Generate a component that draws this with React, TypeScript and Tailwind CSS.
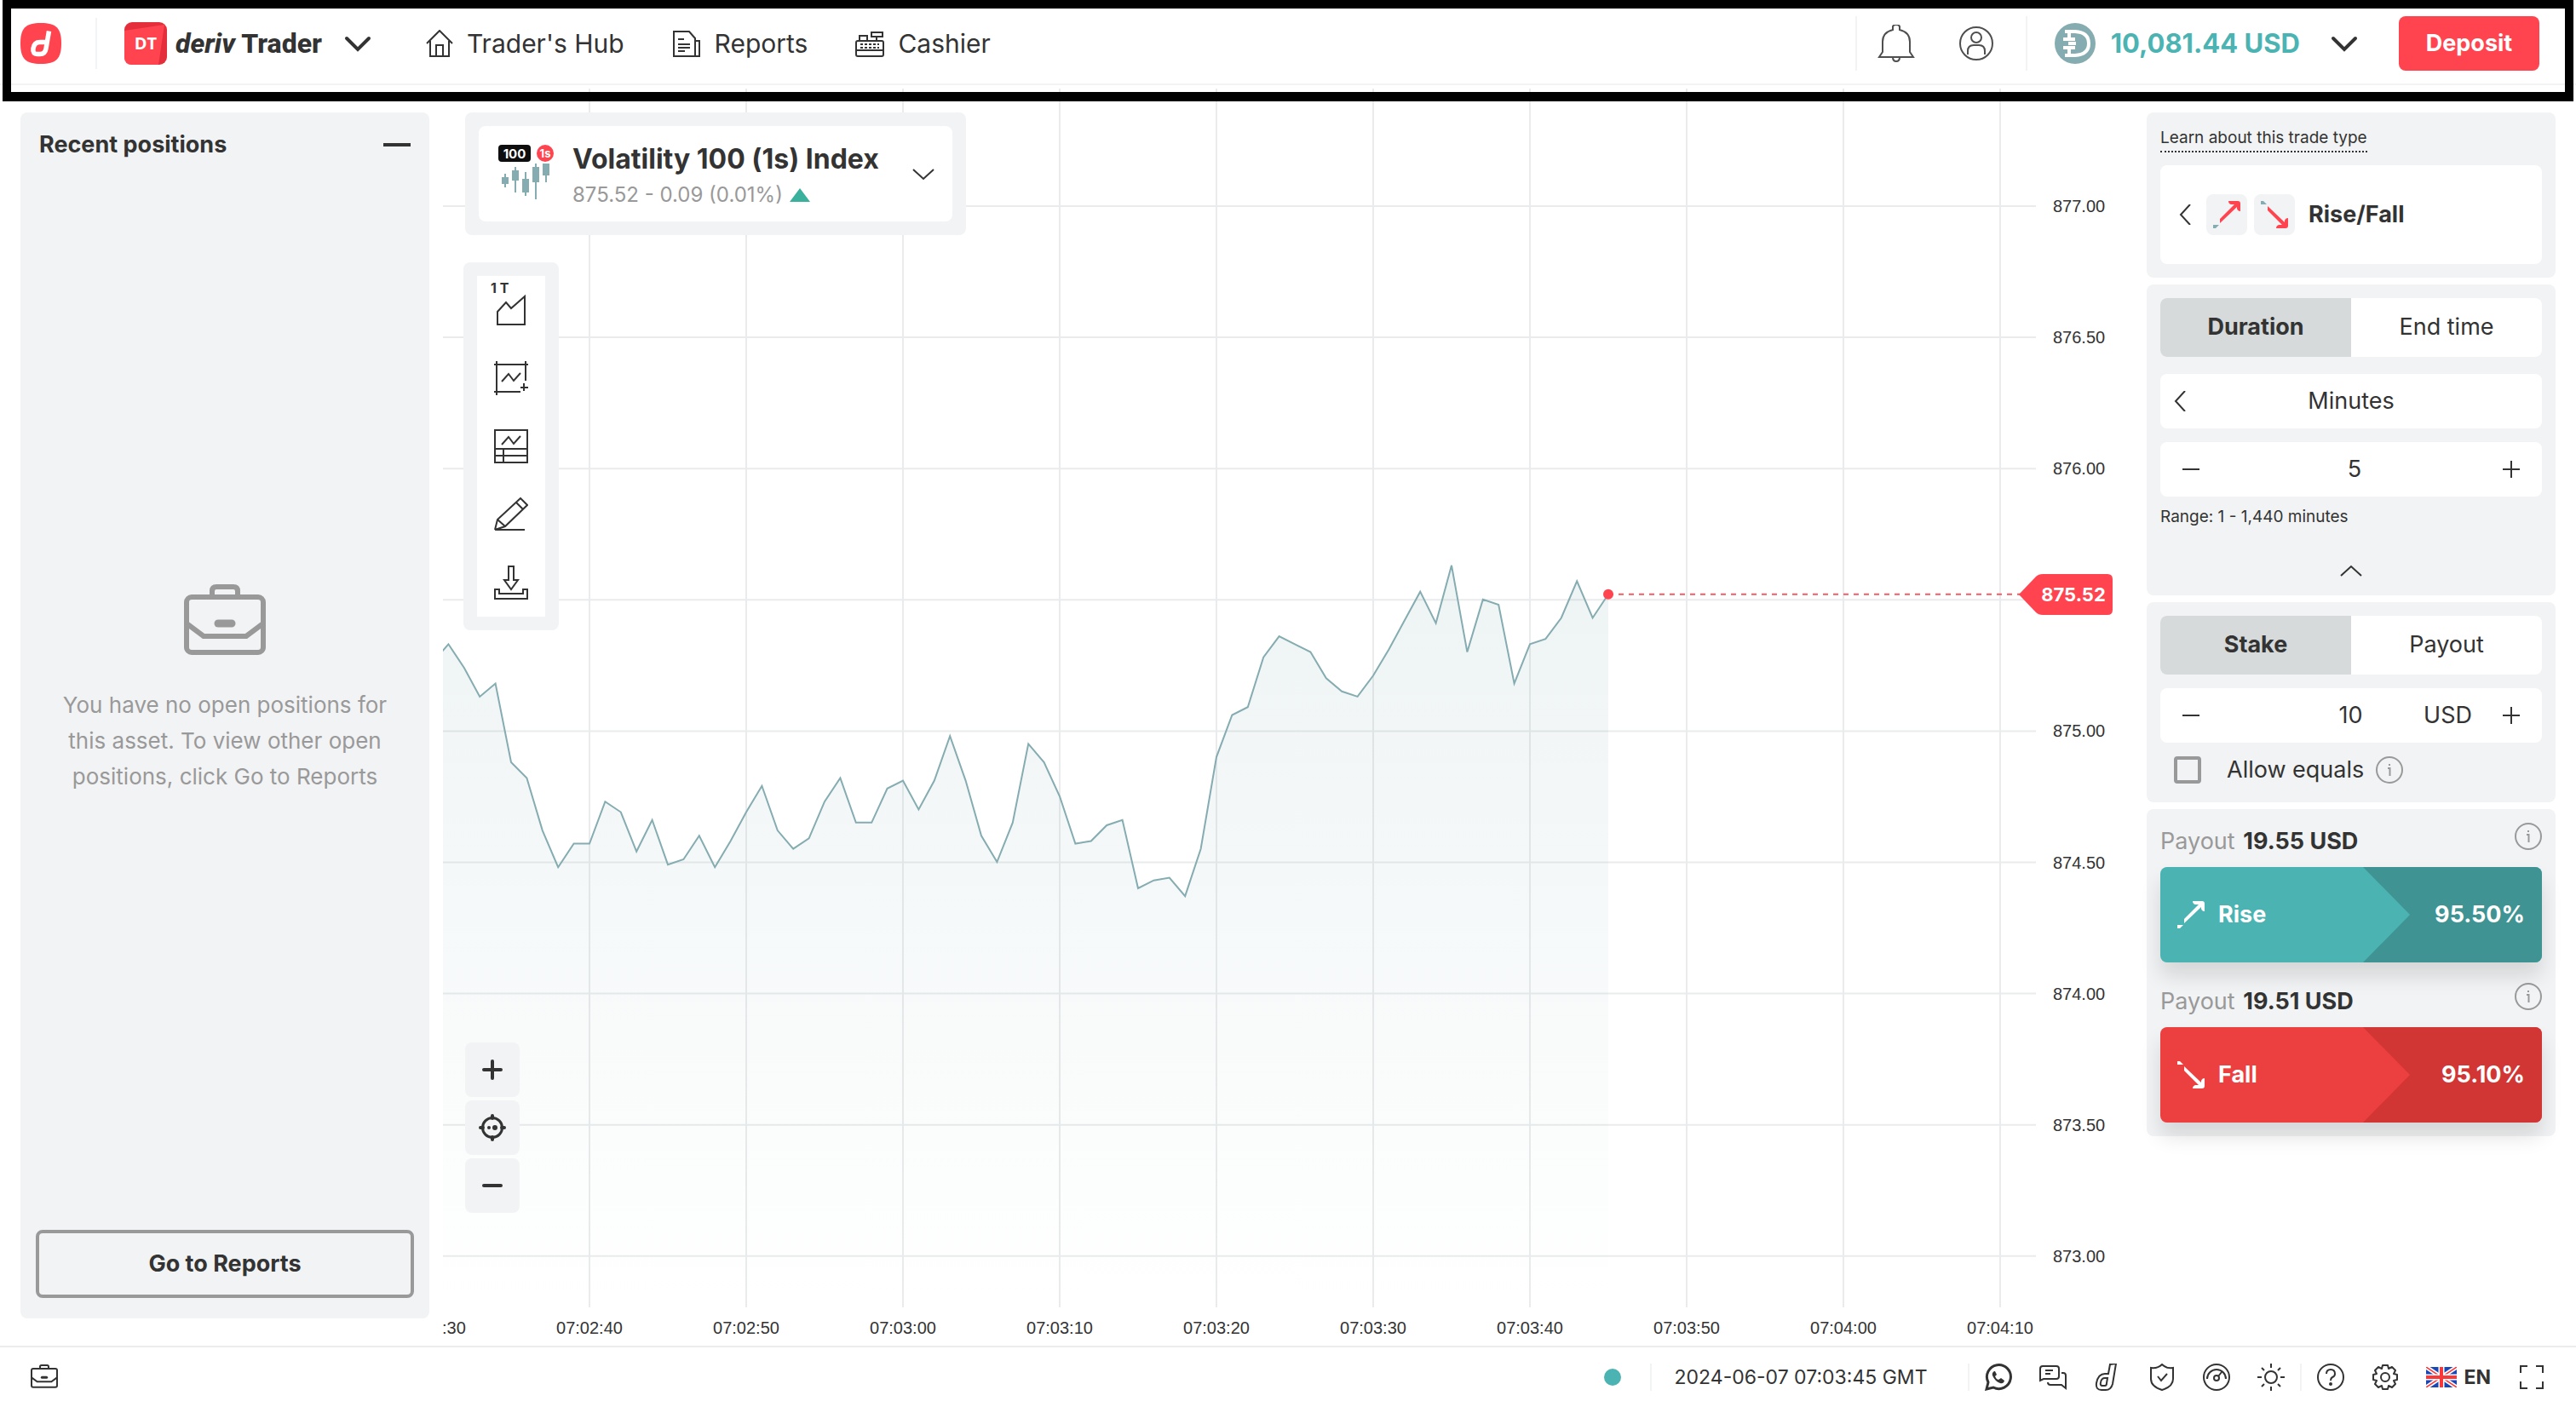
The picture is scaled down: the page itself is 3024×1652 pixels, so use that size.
import type { ReactNode } from 'react';

// Ticks in hundredths above 875.00, one per second; index 10 is 07:02:40.
const TICKS = [
  26, 33, 24, 13, 18, -12, -18, -38, -52, -43, -43, -27, -31, -46, -34, -51, -49, -40, -52, -42, -31, -21, -38, -45, -41,
  -27, -18, -35, -35, -22, -19, -30, -19, -2, -19, -40, -50, -35, -5, -12, -25, -43, -42, -36, -34, -60, -57, -56, -63,
  -45, -10, 6, 9, 28, 36, 33, 30, 20, 15, 13, 21, 31, 42, 53, 41, 63, 30, 50, 48, 18, 33, 35, 43, 57, 43, 52,
];

const PRICES = ['877.00', '876.50', '876.00', '875.50', '875.00', '874.50', '874.00', '873.50', '873.00'];

const TIMES = [
  '07:02:40', '07:02:50', '07:03:00', '07:03:10', '07:03:20', '07:03:30', '07:03:40', '07:03:50', '07:04:00', '07:04:10',
];

const priceY = (hundredths: number) => 754 - hundredths * 3.082;
const tickX = (index: number) => 172 + (index - 10) * 18.4;

type IconProps = {
  size?: number;
  box?: number;
  width?: number;
  className?: string;
  children: ReactNode;
};

function Icon({ size = 32, box = size, width = 2, className = '', children }: IconProps) {
  return (
    <svg
      width={size}
      height={size}
      viewBox={`0 0 ${box} ${box}`}
      fill="none"
      stroke="currentColor"
      strokeWidth={width}
      className={`block shrink-0 ${className}`}
      aria-hidden="true"
    >
      {children}
    </svg>
  );
}

function Divider({ className = '' }: { className?: string }) {
  return <span className={`w-[2px] shrink-0 bg-[#f2f3f4] ${className}`} />;
}

function ChevronDown({ bold = false }: { bold?: boolean }) {
  return bold ? (
    <Icon size={32} width={4}>
      <path d="M3 10l13 13 13-13" strokeLinecap="round" />
    </Icon>
  ) : (
    <Icon size={32}>
      <path d="M4 11l12 11 12-11" />
    </Icon>
  );
}

function ChevronLeft() {
  return (
    <Icon size={24}>
      <path d="M17 0L6 12l11 12" />
    </Icon>
  );
}

function InfoIcon() {
  return (
    <Icon size={32} className="text-[#999999]">
      <circle cx="16" cy="16" r="15" />
      <path d="M14 14h2.500v9M16 9v2" />
    </Icon>
  );
}

function ArrowIcon({ down = false, tail }: { down?: boolean; tail?: string }) {
  return (
    <Icon size={32} className={down ? '-scale-y-100' : ''} width={0}>
      <path d="M18 0h11q3 0 3 3v9q-3 0-4-3V7L8 26v-5L25 4h-4q-3-1-3-4z" fill="currentColor" />
      <path d="M0 28h7l-4 4H0z" fill={tail ?? 'currentColor'} />
    </Icon>
  );
}

function DerivLogo() {
  return (
    <svg width="48" height="48" viewBox="0 0 48 48" className="block shrink-0" aria-hidden="true">
      <path d="M24 0c18 0 24 6 24 24s-6 24-24 24S0 42 0 24 6 0 24 0z" fill="#ff444f" />
      <path d="M33.500 9.500L30 30q-1 6.500-7 6.500h-3q-6 0-5-6.500 1-7.500 8-7.500h7.500" fill="none" stroke="#fff" strokeWidth="5.500" />
    </svg>
  );
}

function TraderLogo() {
  return (
    <svg width="50" height="50" viewBox="0 0 50 50" className="block shrink-0" aria-hidden="true">
      <rect width="50" height="50" rx="9" fill="#e42e3c" />
      <path d="M0 10L47 3l-7 47H9q-9 0-9-9z" fill="#ff444f" />
      <text x="25" y="32" textAnchor="middle" className="fill-white font-['Open_Sans'] text-[20px] font-bold">
        DT
      </text>
    </svg>
  );
}

function Header() {
  return (
    <header className="flex h-[100px] items-start border-b-2 border-[#f2f3f4] pl-6 pr-[43px] pt-[19px]">
      <div className="flex h-16 items-center">
        <a href="#home" aria-label="Deriv">
          <DerivLogo />
        </a>
        <Divider className="ml-10 mr-8 h-[60px]" />
        <button type="button" className="flex items-center">
          <TraderLogo />
          <span className="ml-[10px] whitespace-nowrap font-[Roboto] text-[32px] font-extrabold">
            <i>deriv</i> Trader
          </span>
          <span className="ml-[26px]">
            <ChevronDown bold />
          </span>
        </button>
      </div>
      <nav className="ml-16 flex h-16 items-center gap-14 text-[30px]">
        <a href="#hub" className="flex items-center gap-4">
          <Icon size={32}>
            <path d="M1 16L16 1l15 15M5 13v18h22V13M12 31V18h8v13" />
          </Icon>
          Trader&apos;s Hub
        </a>
        <a href="#reports" className="flex items-center gap-4">
          <Icon size={34}>
            <path d="M2 3h18l7 8v21H2zM27 14h5v18H20M7 12h7M7 18h14M7 22h14M7 26h8" />
          </Icon>
          Reports
        </a>
        <a href="#cashier" className="flex items-center gap-4">
          <Icon size={34}>
            <rect x="1" y="14" width="32" height="18" rx="2" />
            <path d="M5 14V8h9v6M19 4h13v5H19zM25 9v5M1 25h32" />
            <path d="M6 18h22M6 22h22" strokeDasharray="3 2" />
          </Icon>
          Cashier
        </a>
      </nav>
      <div className="ml-auto flex h-16 items-center">
        <Divider className="h-16" />
        <button type="button" aria-label="Notifications" className="ml-6">
          <Icon size={44} className="text-[#4f4f4f]">
            <path d="M2 38h40l-4-6V20q0-11-12-14V2q-1-2-4-2t-4 2v4Q6 9 6 20v12zM18 38q0 5 4 5t4-5" />
          </Icon>
        </button>
        <button type="button" aria-label="Account" className="ml-[52px]">
          <Icon size={40} className="text-[#4f4f4f]">
            <circle cx="20" cy="20" r="19" />
            <circle cx="20" cy="13" r="6" />
            <path d="M10 33V29q0-7 7-7h6q7 0 7 7v4" />
          </Icon>
        </button>
        <Divider className="ml-[38px] h-16" />
        <button type="button" className="ml-8 flex items-center">
          <svg width="48" height="48" viewBox="0 0 48 48" aria-hidden="true">
            <circle cx="24" cy="24" r="24" fill="#85acb0" />
            <path
              d="M12 10h12q16 1 16 14T24 38H12M17 10v7M17 31v7M10 19h14M10 29h14M16 24h9"
              fill="none"
              stroke="#fff"
              strokeWidth="4"
            />
          </svg>
          <span className="ml-[18px] whitespace-nowrap text-[31px] font-bold text-[#4bb4b3]">10,081.44 USD</span>
          <span className="ml-9">
            <ChevronDown bold />
          </span>
        </button>
        <button
          type="button"
          className="ml-12 h-16 w-[165px] rounded-lg bg-[#ff444f] text-[27px] font-bold text-white"
        >
          Deposit
        </button>
      </div>
    </header>
  );
}

function Briefcase({ size, width }: { size: number; width: number }) {
  return (
    <Icon size={size} box={96} width={width}>
      <rect x="3" y="18" width="90" height="65" rx="6" />
      <path d="M33 18v-7q0-5 5-5h20q5 0 5 5v7M3 49l20 15h50l20-15" />
      <path d="M40 49h16" strokeWidth={width + 3} strokeLinecap="round" />
    </Icon>
  );
}

function PositionsPanel() {
  return (
    <aside className="my-8 ml-6 mr-4 flex w-[480px] shrink-0 flex-col rounded-lg bg-[#f2f3f4] px-[18px] pb-6 pt-5">
      <div className="flex items-center justify-between px-1">
        <h2 className="text-[27px] font-bold leading-9">Recent positions</h2>
        <button type="button" aria-label="Minimise" className="flex h-9 w-8 items-center">
          <span className="h-1 w-8 bg-[#333333]" />
        </button>
      </div>
      <div className="flex flex-1 flex-col items-center justify-center pb-4 text-[#999999]">
        <Briefcase size={96} width={6} />
        <p className="mt-7 w-[420px] text-center text-[26px] leading-[42px]">
          You have no open positions for
          <br />
          this asset. To view other open
          <br />
          positions, click Go to Reports
        </p>
      </div>
      <a
        href="#reports"
        className="flex h-20 items-center justify-center rounded-lg border-4 border-[#999999] text-[27px] font-bold"
      >
        Go to Reports
      </a>
    </aside>
  );
}

function ChartPlot() {
  const line = TICKS.map((tick, i) => `${tickX(i)},${priceY(tick)}`).join(' ');
  const lastX = tickX(TICKS.length - 1);
  const lastY = priceY(TICKS[TICKS.length - 1]);

  return (
    <svg viewBox="0 0 1984 1476" className="block h-auto w-full font-['Liberation_Sans'] text-[20px]">
      <defs>
        <linearGradient id="area" x1="0" y1="560" x2="0" y2="1431" gradientUnits="userSpaceOnUse">
          <stop offset="0" stopColor="#85acb0" stopOpacity="0.14" />
          <stop offset="1" stopColor="#85acb0" stopOpacity="0" />
        </linearGradient>
      </defs>
      <g stroke="#e9ebec" strokeWidth="2">
        {PRICES.map((price, i) => (
          <line key={price} x1="0" x2="1870" y1={138 + i * 154.1} y2={138 + i * 154.1} />
        ))}
        {TIMES.map((time, i) => (
          <line key={time} x1={172 + i * 184} x2={172 + i * 184} y1="0" y2="1431" />
        ))}
      </g>
      <polygon points={`${line} ${lastX},1431 ${tickX(0)},1431`} fill="url(#area)" />
      <polyline points={line} fill="none" stroke="#85acb0" strokeWidth="2" />
      <line x1={lastX} x2="1852" y1={lastY} y2={lastY} stroke="#ec5f67" strokeWidth="2" strokeDasharray="6 6" />
      <circle cx={lastX} cy={lastY} r="6" fill="#ff444f" />
      <g fill="#333333">
        {PRICES.map((price, i) =>
          price === '875.50' ? null : (
            <text key={price} x="1890" y={145 + i * 154.1}>
              {price}
            </text>
          ),
        )}
        <text x="-1" y="1462">
          :30
        </text>
        {TIMES.map((time, i) => (
          <text key={time} x={172 + i * 184} y="1462" textAnchor="middle">
            {time}
          </text>
        ))}
      </g>
      <path d="M1850 594l20-21q3-3 8-3h76q6 0 6 6v36q0 6-6 6h-76q-5 0-8-3z" fill="#ff444f" />
      <text x="1914" y="602" textAnchor="middle" className="fill-white font-[Inter] text-[22px] font-bold">
        875.52
      </text>
    </svg>
  );
}

function MarketPicker() {
  return (
    <button type="button" className="block rounded-lg bg-[#f2f3f4] p-4 text-left">
      <span className="flex h-[112px] items-center rounded-lg bg-white pl-[22px] pr-[18px]">
        <svg width="68" height="68" viewBox="0 0 68 68" className="shrink-0" aria-hidden="true">
          <rect x="1" y="0" width="38" height="20" rx="4" fill="#0e0e0e" />
          <text x="20" y="16" textAnchor="middle" className="fill-white font-[Inter] text-[15px] font-bold">
            100
          </text>
          <circle cx="56" cy="10" r="10" fill="#ff444f" />
          <text x="56" y="15" textAnchor="middle" className="fill-white font-[Inter] text-[13px] font-bold">
            1s
          </text>
          <path
            d="M5 38h8v8H5zM8 34h2v16H8zM17 30h8v12h-8zM20 26h2v30h-2zM29 40h8v16h-8zM32 32h2v28h-2zM41 26h8v18h-8zM44 22h2v42h-2zM53 22h8v14h-8zM56 30h2v14h-2z"
            fill="#85acb0"
          />
        </svg>
        <span className="ml-5 w-[364px] whitespace-nowrap pt-2">
          <span className="block text-[32px] font-bold leading-[42px]">Volatility 100 (1s) Index</span>
          <span className="flex items-center gap-2 text-[24px] leading-[42px] text-[#999999]">
            875.52 - 0.09 (0.01%)
            <svg width="24" height="16" viewBox="0 0 24 16" aria-hidden="true">
              <path d="M12 0l12 16H0z" fill="#39b19d" />
            </svg>
          </span>
        </span>
        <span className="ml-[32px]">
          <ChevronDown />
        </span>
      </span>
    </button>
  );
}

const TOOLS: { label: string; art: ReactNode }[] = [
  { label: 'Chart types', art: <path d="M4 37V22l10-11 6 7L36 4v33z" /> },
  {
    label: 'Indicators',
    art: <path d="M3 0v40M0 4h40M37 0v23M0 36h31M9 24l8-9 6 8 8-9M35 26v9M31 31h9" />,
  },
  {
    label: 'Templates',
    art: <path d="M1 1h38v38H1zM1 23h38M1 31h38M11 23v16M9 18l8-9 6 8 8-9" />,
  },
  {
    label: 'Drawing tools',
    art: <path d="M1 38h35M1 38l3-12L31 1l8 8-26 25-12 4M26 6l8 8M4 26l9 8" />,
  },
  {
    label: 'Download',
    art: <path d="M17 1h6v16h5l-8 11-8-11h5zM1 28h5v5h28v-5h5v11H1z" />,
  },
];

function ChartTools() {
  return (
    <div className="-ml-0.5 w-28 rounded-lg bg-[#f2f3f4] p-4">
      <div className="bg-white">
        {TOOLS.map((tool, i) => (
          <button
            key={tool.label}
            type="button"
            aria-label={tool.label}
            className="relative flex h-20 w-full items-center justify-center"
          >
            {i === 0 && <span className="absolute left-4 top-1 text-[16px] font-bold leading-5">1 T</span>}
            <Icon size={40}>{tool.art}</Icon>
          </button>
        ))}
      </div>
    </div>
  );
}

function ZoomControls() {
  const button = 'flex h-16 w-16 items-center justify-center rounded-lg bg-[#f2f3f4]';
  return (
    <div className="flex flex-col gap-1">
      <button type="button" aria-label="Zoom in" className={button}>
        <Icon size={24} width={4}>
          <path d="M2 12h20M12 2v20" strokeLinecap="round" />
        </Icon>
      </button>
      <button type="button" aria-label="Scale to fit" className={button}>
        <Icon size={32} width={3}>
          <circle cx="16" cy="16" r="11.500" />
          <path d="M16 2v3M16 27v3M2 16h3M27 16h3" strokeWidth="4" strokeLinecap="round" />
          <circle cx="12" cy="16" r="2" fill="currentColor" strokeWidth="0" />
          <circle cx="19" cy="16" r="3" fill="currentColor" strokeWidth="0" />
        </Icon>
      </button>
      <button type="button" aria-label="Zoom out" className={button}>
        <Icon size={24} width={4}>
          <path d="M2 12h20" strokeLinecap="round" />
        </Icon>
      </button>
    </div>
  );
}

function ChartArea() {
  return (
    <section className="relative mt-1 min-w-0 flex-1">
      <ChartPlot />
      <div className="absolute left-[26px] top-7">
        <MarketPicker />
        <div className="mt-8">
          <ChartTools />
        </div>
      </div>
      <div className="absolute bottom-[156px] left-[26px]">
        <ZoomControls />
      </div>
    </section>
  );
}

function Tabs({ items }: { items: [string, string] }) {
  return (
    <div className="flex h-[69px] overflow-hidden rounded-lg bg-white text-[27px]">
      <button type="button" className="flex-1 bg-[#d6dada] font-bold">
        {items[0]}
      </button>
      <button type="button" className="flex-1">
        {items[1]}
      </button>
    </div>
  );
}

function Stepper({ label, value, unit }: { label: string; value: string; unit?: string }) {
  return (
    <div className="flex h-16 items-center rounded-lg bg-white px-[26px]">
      <button type="button" aria-label={`Decrease ${label}`}>
        <Icon size={20}>
          <path d="M0 10h20" />
        </Icon>
      </button>
      <input
        aria-label={label}
        defaultValue={value}
        className={`min-w-0 flex-1 bg-transparent text-center text-[27px] outline-none ${unit ? 'pl-[92px]' : 'pl-2'}`}
      />
      {unit && <span className="mr-9 text-[27px]">{unit}</span>}
      <button type="button" aria-label={`Increase ${label}`}>
        <Icon size={20}>
          <path d="M0 10h20M10 0v20" />
        </Icon>
      </button>
    </div>
  );
}

type PurchaseProps = {
  label: string;
  payout: string;
  percent: string;
  className: string;
  darkClassName: string;
  down?: boolean;
};

function Purchase({ label, payout, percent, className, darkClassName, down }: PurchaseProps) {
  return (
    <div>
      <div className="flex h-[52px] items-start justify-between">
        <p className="pt-1 text-[27px] leading-9">
          <span className="text-[#999999]">Payout</span> <b className="ml-0.5">{payout}</b>
        </p>
        <InfoIcon />
      </div>
      <button
        type="button"
        className={`relative flex h-28 w-full items-center overflow-hidden rounded-lg pl-5 pr-5 text-[27px] font-bold text-white ${className}`}
      >
        <svg
          viewBox="0 0 210 112"
          className={`absolute right-0 top-0 h-full w-[210px] ${darkClassName}`}
          aria-hidden="true"
        >
          <path d="M0 0h210v112H0l55-56z" fill="currentColor" />
        </svg>
        <ArrowIcon down={down} />
        <span className="ml-4">{label}</span>
        <span className="relative ml-auto">{percent}</span>
      </button>
    </div>
  );
}

function TradePanel() {
  const card = 'rounded-lg bg-[#f2f3f4] px-4';
  return (
    <aside className="my-8 ml-4 mr-6 flex w-[480px] shrink-0 flex-col gap-2">
      <div className={`${card} flex flex-col items-start pb-4 pt-[15px]`}>
        <a href="#learn" className="border-b-2 border-dotted border-[#333333] text-[19px] leading-[30px]">
          Learn about this trade type
        </a>
        <button type="button" className="mt-[15px] flex h-[116px] w-full items-center rounded-lg bg-white pl-[18px]">
          <ChevronLeft />
          <span className="ml-3 rounded-lg bg-[#f2f3f4] p-2 text-[#ff444f]">
            <ArrowIcon tail="#85acb0" />
          </span>
          <span className="ml-2 rounded-lg bg-[#f2f3f4] p-2 text-[#ff444f]">
            <ArrowIcon down tail="#85acb0" />
          </span>
          <span className="ml-4 text-[27px] font-bold">Rise/Fall</span>
        </button>
      </div>

      <div className={`${card} h-[365px] pt-4`}>
        <Tabs items={['Duration', 'End time']} />
        <div className="mt-5 flex h-16 items-center rounded-lg bg-white px-3">
          <button type="button" aria-label="Previous unit">
            <ChevronLeft />
          </button>
          <span className="flex-1 pr-6 text-center text-[27px]">Minutes</span>
        </div>
        <div className="mt-4">
          <Stepper label="duration" value="5" />
        </div>
        <p className="mt-2 text-[19px] leading-8">Range: 1 - 1,440 minutes</p>
        <button type="button" aria-label="Collapse" className="mx-auto mt-8 block rotate-180">
          <ChevronDown />
        </button>
      </div>

      <div className={`${card} h-[235px] pt-4`}>
        <Tabs items={['Stake', 'Payout']} />
        <div className="mt-4">
          <Stepper label="stake" value="10" unit="USD" />
        </div>
        <div className="mt-4 flex h-8 items-center pl-4">
          <input
            id="allow-equals"
            type="checkbox"
            className="h-8 w-8 appearance-none rounded-[4px] border-4 border-[#999999]"
          />
          <label htmlFor="allow-equals" className="ml-[30px] mr-[14px] text-[27px]">
            Allow equals
          </label>
          <InfoIcon />
        </div>
      </div>

      <div className={`${card} flex flex-col gap-6 pb-4 pt-4`}>
        <Purchase
          label="Rise"
          payout="19.55 USD"
          percent="95.50%"
          className="bg-[#4bb4b3] shadow-[0_16px_24px_rgba(0,0,0,0.12)]"
          darkClassName="text-[#3f9493]"
        />
        <Purchase
          label="Fall"
          payout="19.51 USD"
          percent="95.10%"
          className="bg-[#ec3f3f] shadow-[0_16px_24px_rgba(0,0,0,0.12)]"
          darkClassName="text-[#d13635]"
          down
        />
      </div>
    </aside>
  );
}

const FOOTER_LINKS: { label: string; art: ReactNode }[] = [
  {
    label: 'WhatsApp',
    art: (
      <>
        <path d="M2 30l2-8A14 14 0 1 1 10 28z" strokeWidth="3" />
        <path d="M11 9q-3 2-2 5 3 7 9 9 4 1 5-3l-4-3-3 2q-3-1-4-4l2-2-2-4z" fill="currentColor" strokeWidth="0" />
      </>
    ),
  },
  {
    label: 'Live chat',
    art: <path d="M1 20V6q0-3 3-3h16q3 0 3 3v9q0 3-3 3H5zM7 8h9M7 12h6M26 11h2q3 0 3 3v15l-5-4H13q-3 0-3-3" />,
  },
  {
    label: 'Deriv',
    art: (
      <>
        <path d="M19 1l7-1-4 24q-2 7-8 7H9q-7 0-6-8 2-11 10-11h4z" />
        <path d="M16 17h-3q-4 0-5 5-1 4 2 4h3q2 0 2-3z" />
      </>
    ),
  },
  {
    label: 'Responsible trading',
    art: <path d="M16 1q5 5 13 4v13q0 9-13 13Q3 27 3 18V5q8 1 13-4zM11 15l4 5 7-8" />,
  },
  {
    label: 'Account limits',
    art: (
      <>
        <circle cx="16" cy="16" r="15" />
        <path d="M5 18a11 11 0 0 1 22 0M18 15l4-5" />
        <circle cx="16" cy="17" r="3" />
      </>
    ),
  },
  {
    label: 'Theme',
    art: (
      <>
        <circle cx="16" cy="16" r="7" />
        <path d="M16 0v5M16 27v5M0 16h5M27 16h5M5 5l3 3M24 24l3 3M27 5l-3 3M8 24l-3 3" />
      </>
    ),
  },
];

function UkFlag() {
  return (
    <svg width="36" height="24" viewBox="0 0 36 24" aria-hidden="true">
      <path d="M0 0h36v24H0z" fill="#1a47b8" />
      <path d="M0 0l36 24M36 0L0 24" stroke="#fff" strokeWidth="5" />
      <path d="M0 0l36 24M36 0L0 24" stroke="#f93939" strokeWidth="1.500" />
      <path d="M18 0v24M0 12h36" stroke="#fff" strokeWidth="7" />
      <path d="M18 0v24M0 12h36" stroke="#f93939" strokeWidth="4" />
    </svg>
  );
}

function Footer() {
  return (
    <footer className="flex h-[72px] items-center border-t-2 border-[#eaeced] pl-9 pr-9">
      <button type="button" aria-label="Positions">
        <Briefcase size={32} width={6} />
      </button>
      <span className="ml-auto h-5 w-5 rounded-full bg-[#4bb4b3]" />
      <Divider className="ml-[34px] h-8" />
      <time className="ml-[27px] whitespace-nowrap text-[23px]">2024-06-07 07:03:45 GMT</time>
      <Divider className="ml-12 h-8" />
      <div className="ml-[18px] flex gap-8">
        {FOOTER_LINKS.map((link) => (
          <a key={link.label} href="#footer" aria-label={link.label}>
            <Icon size={32}>{link.art}</Icon>
          </a>
        ))}
      </div>
      <Divider className="ml-[18px] h-8" />
      <a href="#help" aria-label="Help centre" className="ml-[18px]">
        <Icon size={32}>
          <circle cx="16" cy="16" r="15" />
          <path d="M11 12q0-5 5-5t5 5q0 3-3 4-2 1-2 4" />
          <circle cx="16" cy="24" r="1" fill="currentColor" />
        </Icon>
      </a>
      <button type="button" aria-label="Platform settings" className="ml-8">
        <Icon size={32}>
          <path
            d="M13 2h6l1 4 4-2 4 4-2 4 4 1v6l-4 1 2 4-4 4-4-2-1 4h-6l-1-4-4 2-4-4 2-4-4-1v-6l4-1-2-4 4-4 4 2z"
            strokeLinejoin="round"
          />
          <circle cx="16" cy="16" r="5" />
        </Icon>
      </button>
      <button type="button" className="ml-8 flex items-center gap-2 text-[23px] font-bold">
        <UkFlag />
        EN
      </button>
      <button type="button" aria-label="Full screen" className="ml-8">
        <Icon size={32}>
          <path d="M3 11V3h8M21 3h8v8M29 21v8h-8M11 29H3v-8" strokeWidth="2" />
        </Icon>
      </button>
    </footer>
  );
}

export default function App() {
  return (
    <div className="relative flex min-h-screen flex-col bg-white font-[Inter,sans-serif] text-[#333333]">
      <Header />
      <main className="flex flex-1">
        <PositionsPanel />
        <ChartArea />
        <TradePanel />
      </main>
      <Footer />
      {/* Highlight frame around the navigation bar */}
      <div className="pointer-events-none absolute inset-x-[3px] top-0 h-[119px] border-[10px] border-b-[11px] border-black" />
    </div>
  );
}
